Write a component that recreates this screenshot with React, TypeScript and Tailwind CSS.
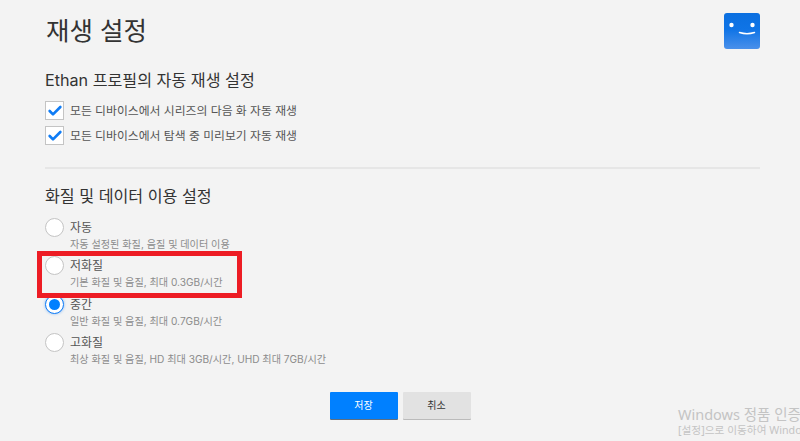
import { Check } from 'lucide-react';

const qualityOptions = [
  { title: '자동', detail: '자동 설정된 화질, 음질 및 데이터 이용', selected: false },
  { title: '저화질', detail: '기본 화질 및 음질, 최대 0.3GB/시간', selected: false },
  { title: '중간', detail: '일반 화질 및 음질, 최대 0.7GB/시간', selected: true },
  { title: '고화질', detail: '최상 화질 및 음질, HD 최대 3GB/시간, UHD 최대 7GB/시간', selected: false },
];

const autoplayOptions = [
  '모든 디바이스에서 시리즈의 다음 화 자동 재생',
  '모든 디바이스에서 탐색 중 미리보기 자동 재생',
];

function ProfileIcon() {
  return (
    <svg width="36" height="36" viewBox="0 0 36 36" className="shrink-0">
      <defs>
        <linearGradient id="face" x1="0" y1="0" x2="0" y2="1">
          <stop offset="0" stopColor="#0b6fe0" />
          <stop offset="0.45" stopColor="#0f74e6" />
          <stop offset="1" stopColor="#4a90ea" />
        </linearGradient>
      </defs>
      <rect width="36" height="36" rx="3" fill="url(#face)" />
      <circle cx="7.5" cy="12" r="2.2" fill="#fff" />
      <circle cx="28.5" cy="12" r="2.2" fill="#fff" />
      <path d="M15.5 19.5 Q 23 21.8 30.5 19.5" fill="none" stroke="#fff" strokeWidth="1.5" strokeLinecap="round" />
    </svg>
  );
}

export default function App() {
  return (
    <div className="relative h-[441px] w-[800px] overflow-hidden bg-[#f3f3f3] font-['Inter','Noto_Sans_CJK_KR',sans-serif]">
      <div className="flex flex-col pl-[45px] pr-[40px]">
        <div className="flex h-[62px] items-start justify-between pt-[13px]">
          <h1 className="pl-[1px] text-[25.5px] leading-[36px] font-normal text-[#333]">재생 설정</h1>
          <ProfileIcon />
        </div>

        <h2 className="mt-[8px] text-[16.15px] leading-[20px] font-normal text-[#333]">Ethan 프로필의 자동 재생 설정</h2>

        <div className="mt-[11px] flex flex-col gap-[6px]">
          {autoplayOptions.map((label) => (
            <div key={label} className="flex h-[19px] items-center gap-[6px]">
              <div className="flex h-[19px] w-[19px] items-center justify-center border border-[#c4c4c4] bg-white">
                <Check size={16} strokeWidth={4} className="text-[#0f7cf5]" />
              </div>
              <span className="pt-[2px] text-[11.85px] text-[#555]">{label}</span>
            </div>
          ))}
        </div>

        <div className="mt-[22px] h-[2px] bg-[#e6e6e6]" />

        <h2 className="mt-[17px] text-[16.15px] leading-[20px] font-normal text-[#333]">화질 및 데이터 이용 설정</h2>

        <div className="mt-[12px] flex flex-col">
          {qualityOptions.map((option) => (
            <div key={option.title} className="flex h-[38.33px] gap-[6px]">
              <div
                className={
                  option.selected
                    ? 'flex h-[19px] w-[19px] items-center justify-center rounded-full border border-[#0f7cf5] bg-white shadow-[0_0_3px_#7fb5f5]'
                    : 'h-[19px] w-[19px] rounded-full border border-[#c4c4c4] bg-white'
                }
              >
                {option.selected && <div className="h-[11px] w-[11px] rounded-full bg-[#0080ff]" />}
              </div>
              <div className="flex flex-col pt-[1px]">
                <span className="text-[12px] leading-[18px] text-[#555]">{option.title}</span>
                <span className="text-[10.15px] leading-[14px] text-[#8c8c8c]">{option.detail}</span>
              </div>
            </div>
          ))}
        </div>

        <div className="mt-[21px] flex justify-center gap-[5px] pr-[5px]">
          <button className="h-[27px] w-[68px] rounded-[1px] bg-[#0080ff] text-[10px] text-white shadow-[0_1px_0_#5f6f80]">저장</button>
          <button className="h-[27px] w-[68px] rounded-[1px] bg-[#e2e2e2] text-[10px] text-[#333] shadow-[0_1px_0_#bbb]">취소</button>
        </div>
      </div>

      {/* annotation box drawn over the page */}
      <div className="absolute left-[37px] top-[251px] h-[47px] w-[205px] border-[5px] border-[#ed1c24]" />

      {/* windows activation watermark, cut by the window edge as in the screenshot */}
      <div className="absolute left-[678px] top-[404px] whitespace-nowrap font-['Noto_Sans','Noto_Sans_CJK_KR',sans-serif] text-[#c4c4c4]">
        <div className="text-[14.5px] leading-[20px]">Windows 정품 인증</div>
        <div className="text-[10.7px] leading-[13px]">[설정]으로 이동하여 Windows</div>
      </div>
    </div>
  );
}
